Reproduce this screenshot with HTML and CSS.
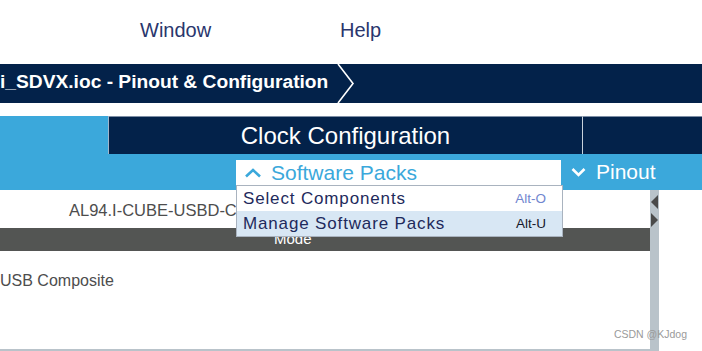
FILE: index.html
```html
<!DOCTYPE html>
<html lang="en">
  <head>
    <meta charset="UTF-8" />
    <meta name="viewport" content="width=device-width, initial-scale=1.0" />
    <title>Pinout &amp; Configuration</title>
    <link rel="stylesheet" href="styles.css">
  </head>
  <body>
    <div class="menubar">
      <span class="menu-item">Window</span>
      <span class="menu-item">Help</span>
    </div>

    <div class="titlebar">
      <span class="title">i_SDVX.ioc - Pinout &amp; Configuration</span>
      <svg class="crumb" width="18" height="39" viewBox="0 0 18 39">
        <polyline points="1,0 16,19.5 1,39" fill="none" stroke="#fff" stroke-width="1.6" />
      </svg>
    </div>

    <div class="tabs">
      <div class="tab-side"></div>
      <div class="tab-clock">Clock Configuration</div>
      <div class="tab-rest"></div>
    </div>

    <div class="toolbar">
      <div class="packs">
        <div class="packs-btn">
          <svg class="chev" width="18" height="10" viewBox="0 0 18 10">
            <polyline points="2,8.5 9,2 16,8.5" fill="none" stroke="#3ba8db" stroke-width="2.6" />
          </svg>
          <span>Software Packs</span>
        </div>
        <!-- open dropdown, sits over the table below -->
        <ul class="dropdown">
          <li class="drop-item">
            <span>Select Components</span>
            <span class="key key-dim">Alt-O</span>
          </li>
          <li class="drop-item active">
            <span>Manage Software Packs</span>
            <span class="key">Alt-U</span>
          </li>
        </ul>
      </div>
      <div class="pinout">
        <svg class="chev" width="15" height="10" viewBox="0 0 15 10">
          <polyline points="1.5,2 7.5,8 13.5,2" fill="none" stroke="#fff" stroke-width="2.6" />
        </svg>
        <span>Pinout</span>
      </div>
    </div>

    <div class="content">
      <div class="panel">
        <div class="pack-name">AL94.I-CUBE-USBD-COMPOSITE</div>
        <div class="mode-head">Mode</div>
        <div class="mode-body">USB Composite</div>
      </div>
      <div class="scrollbar">
        <span class="arrow arrow-left"></span>
        <span class="arrow arrow-right"></span>
      </div>
      <div class="filler"></div>
      <span class="watermark">CSDN @KJdog</span>
    </div>
  </body>
</html>
```

FILE: styles.css
```css
body {
  margin: 0;
  width: 702px;
  height: 351px;
  overflow: hidden;
  background-color: #fff;
  font-family: "Liberation Sans", Arial, sans-serif;
}

.menubar {
  height: 64px;
  display: flex;
  padding-left: 140px;
  line-height: 60px;
  font-size: 20px;
  color: #2a366d;
}
.menu-item {
  width: 200px;
}

.titlebar {
  height: 39px;
  background-color: #03224a;
  display: flex;
  align-items: center;
}
.title {
  color: #fff;
  font-weight: bold;
  font-size: 19.2px;
  padding-bottom: 4px;
}
.crumb {
  margin-left: 9px;
}

.tabs {
  margin-top: 13px;
  height: 38px;
  display: flex;
}
.tab-side {
  width: 108px;
  background-color: #3ba8db;
  border-right: 1px solid #9fb6cb;
}
.tab-clock {
  width: 473px;
  background-color: #03224a;
  border-top: 1px solid #7d8ea5;
  border-right: 1px solid #c9d2dc;
  color: #fff;
  font-size: 24px;
  text-align: center;
  line-height: 37px;
}
.tab-rest {
  flex: 1;
  background-color: #03224a;
  border-top: 1px solid #7d8ea5;
}

.toolbar {
  height: 36px;
  background-color: #3ba8db;
  display: flex;
  align-items: flex-start;
}
.packs {
  position: relative;
  margin-left: 236px;
  margin-top: 6px;
}
.packs-btn {
  width: 325px;
  height: 30px;
  background-color: #fff;
  display: flex;
  align-items: flex-start;
  line-height: 25px;
  font-size: 21px;
  color: #3ba8db;
}
.packs-btn .chev {
  margin: 8px 9px 0 8px;
}
.dropdown {
  position: absolute;
  z-index: 10;
  top: 25px;
  left: 0;
  width: 325px;
  margin: 0;
  padding: 0;
  list-style: none;
  background-color: #fff;
  border: 1px solid #a9b3bf;
}
.drop-item {
  height: 25px;
  display: flex;
  justify-content: space-between;
  align-items: center;
  padding: 0 16px 0 6px;
  font-size: 17px;
  letter-spacing: 0.85px;
  color: #1e2a5c;
}
.drop-item.active {
  background-color: #d8e7f4;
}
.key {
  font-size: 13.5px;
  letter-spacing: 0;
  color: #16182a;
}
.key-dim {
  color: #7186cf;
}

.pinout {
  display: flex;
  align-items: center;
  height: 36px;
  margin-left: 10px;
  color: #fff;
  font-size: 21px;
  padding-bottom: 1px;
}
.pinout .chev {
  margin-right: 10px;
}

.content {
  position: relative;
  height: 161px;
  display: flex;
}
.panel {
  width: 650px;
  border-bottom: 2px solid #b9c3ca;
  color: #4d4d4d;
}
.pack-name {
  height: 38px;
  line-height: 40px;
  padding-left: 69px;
  font-size: 16.5px;
}
.mode-head {
  height: 23px;
  background-color: #535553;
  color: #fff;
  font-size: 15px;
  line-height: 22px;
  padding-left: 274px;
}
.mode-body {
  padding-top: 21px;
  font-size: 16px;
}
.scrollbar {
  width: 9px;
  background-color: #b9c3ca;
  display: flex;
  flex-direction: column;
  align-items: center;
  padding-top: 5px;
  gap: 4px;
}
.arrow {
  width: 0;
  height: 0;
  border-top: 7px solid transparent;
  border-bottom: 7px solid transparent;
}
.arrow-left {
  border-right: 7px solid #4a4a4a;
}
.arrow-right {
  border-left: 7px solid #4a4a4a;
}
.filler {
  flex: 1;
}
.watermark {
  position: absolute;
  right: 15px;
  bottom: 11px;
  font-size: 10.5px;
  color: #9a9a9a;
}
```
